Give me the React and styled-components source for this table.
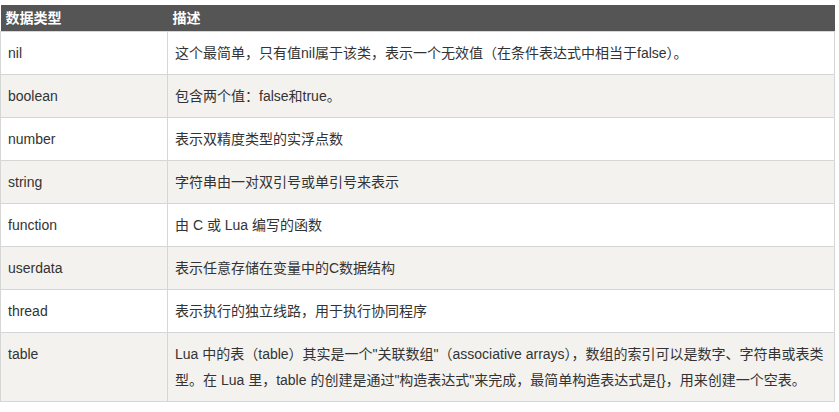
import React from 'react'
import styled, { createGlobalStyle } from 'styled-components'

const GlobalStyle = createGlobalStyle`
  body {
    margin: 0;
    background: #fff;
  }
`

const rows = [
  ['nil', ['这个最简单，只有值nil属于该类，表示一个无效值（在条件表达式中相当于false）。']],
  ['boolean', ['包含两个值：false和true。']],
  ['number', ['表示双精度类型的实浮点数']],
  ['string', ['字符串由一对双引号或单引号来表示']],
  ['function', ['由 C 或 Lua 编写的函数']],
  ['userdata', ['表示任意存储在变量中的C数据结构']],
  ['thread', ['表示执行的独立线路，用于执行协同程序']],
  ['table', ['Lua 中的表（table）其实是一个"关联数组"（associative arrays），数组的索引可以是数字、字符串或表类型。在 Lua 里，table 的创建是通过"构造表达式"来完成，最简单构造表达式是{}，用来创建一个空表。']],
]

const Page = styled.div`
  padding-top: 5px;
  font-family: "Liberation Sans", "Noto Sans CJK SC", sans-serif;
  font-size: 14px;
  color: #333;
`

const Table = styled.table`
  width: 835px;
  border-collapse: collapse;
  table-layout: fixed;
`

const HeadCell = styled.th`
  background: #555;
  color: #fff;
  font-weight: bold;
  text-align: left;
  height: 26px;
  padding: 0 5px;
  line-height: 26px;
  font-size: 14px;
  width: ${(p) => p.$w || 'auto'};
`

const Row = styled.tr`
  background: ${(p) => (p.$alt ? '#f3f2ef' : '#fff')};
`

const Cell = styled.td`
  border: 1px solid #d6d6d6;
  padding: 8px 7px;
  line-height: 26px;
  vertical-align: top;
`

export default function App() {
  return (
    <Page>
      <GlobalStyle />
      <Table>
        <thead>
          <tr>
            <HeadCell $w="157px">数据类型</HeadCell>
            <HeadCell>描述</HeadCell>
          </tr>
        </thead>
        <tbody>
          {rows.map(([type, desc], i) => (
            <Row key={type} $alt={i % 2 === 1}>
              <Cell>{type}</Cell>
              <Cell>{desc}</Cell>
            </Row>
          ))}
        </tbody>
      </Table>
    </Page>
  )
}
